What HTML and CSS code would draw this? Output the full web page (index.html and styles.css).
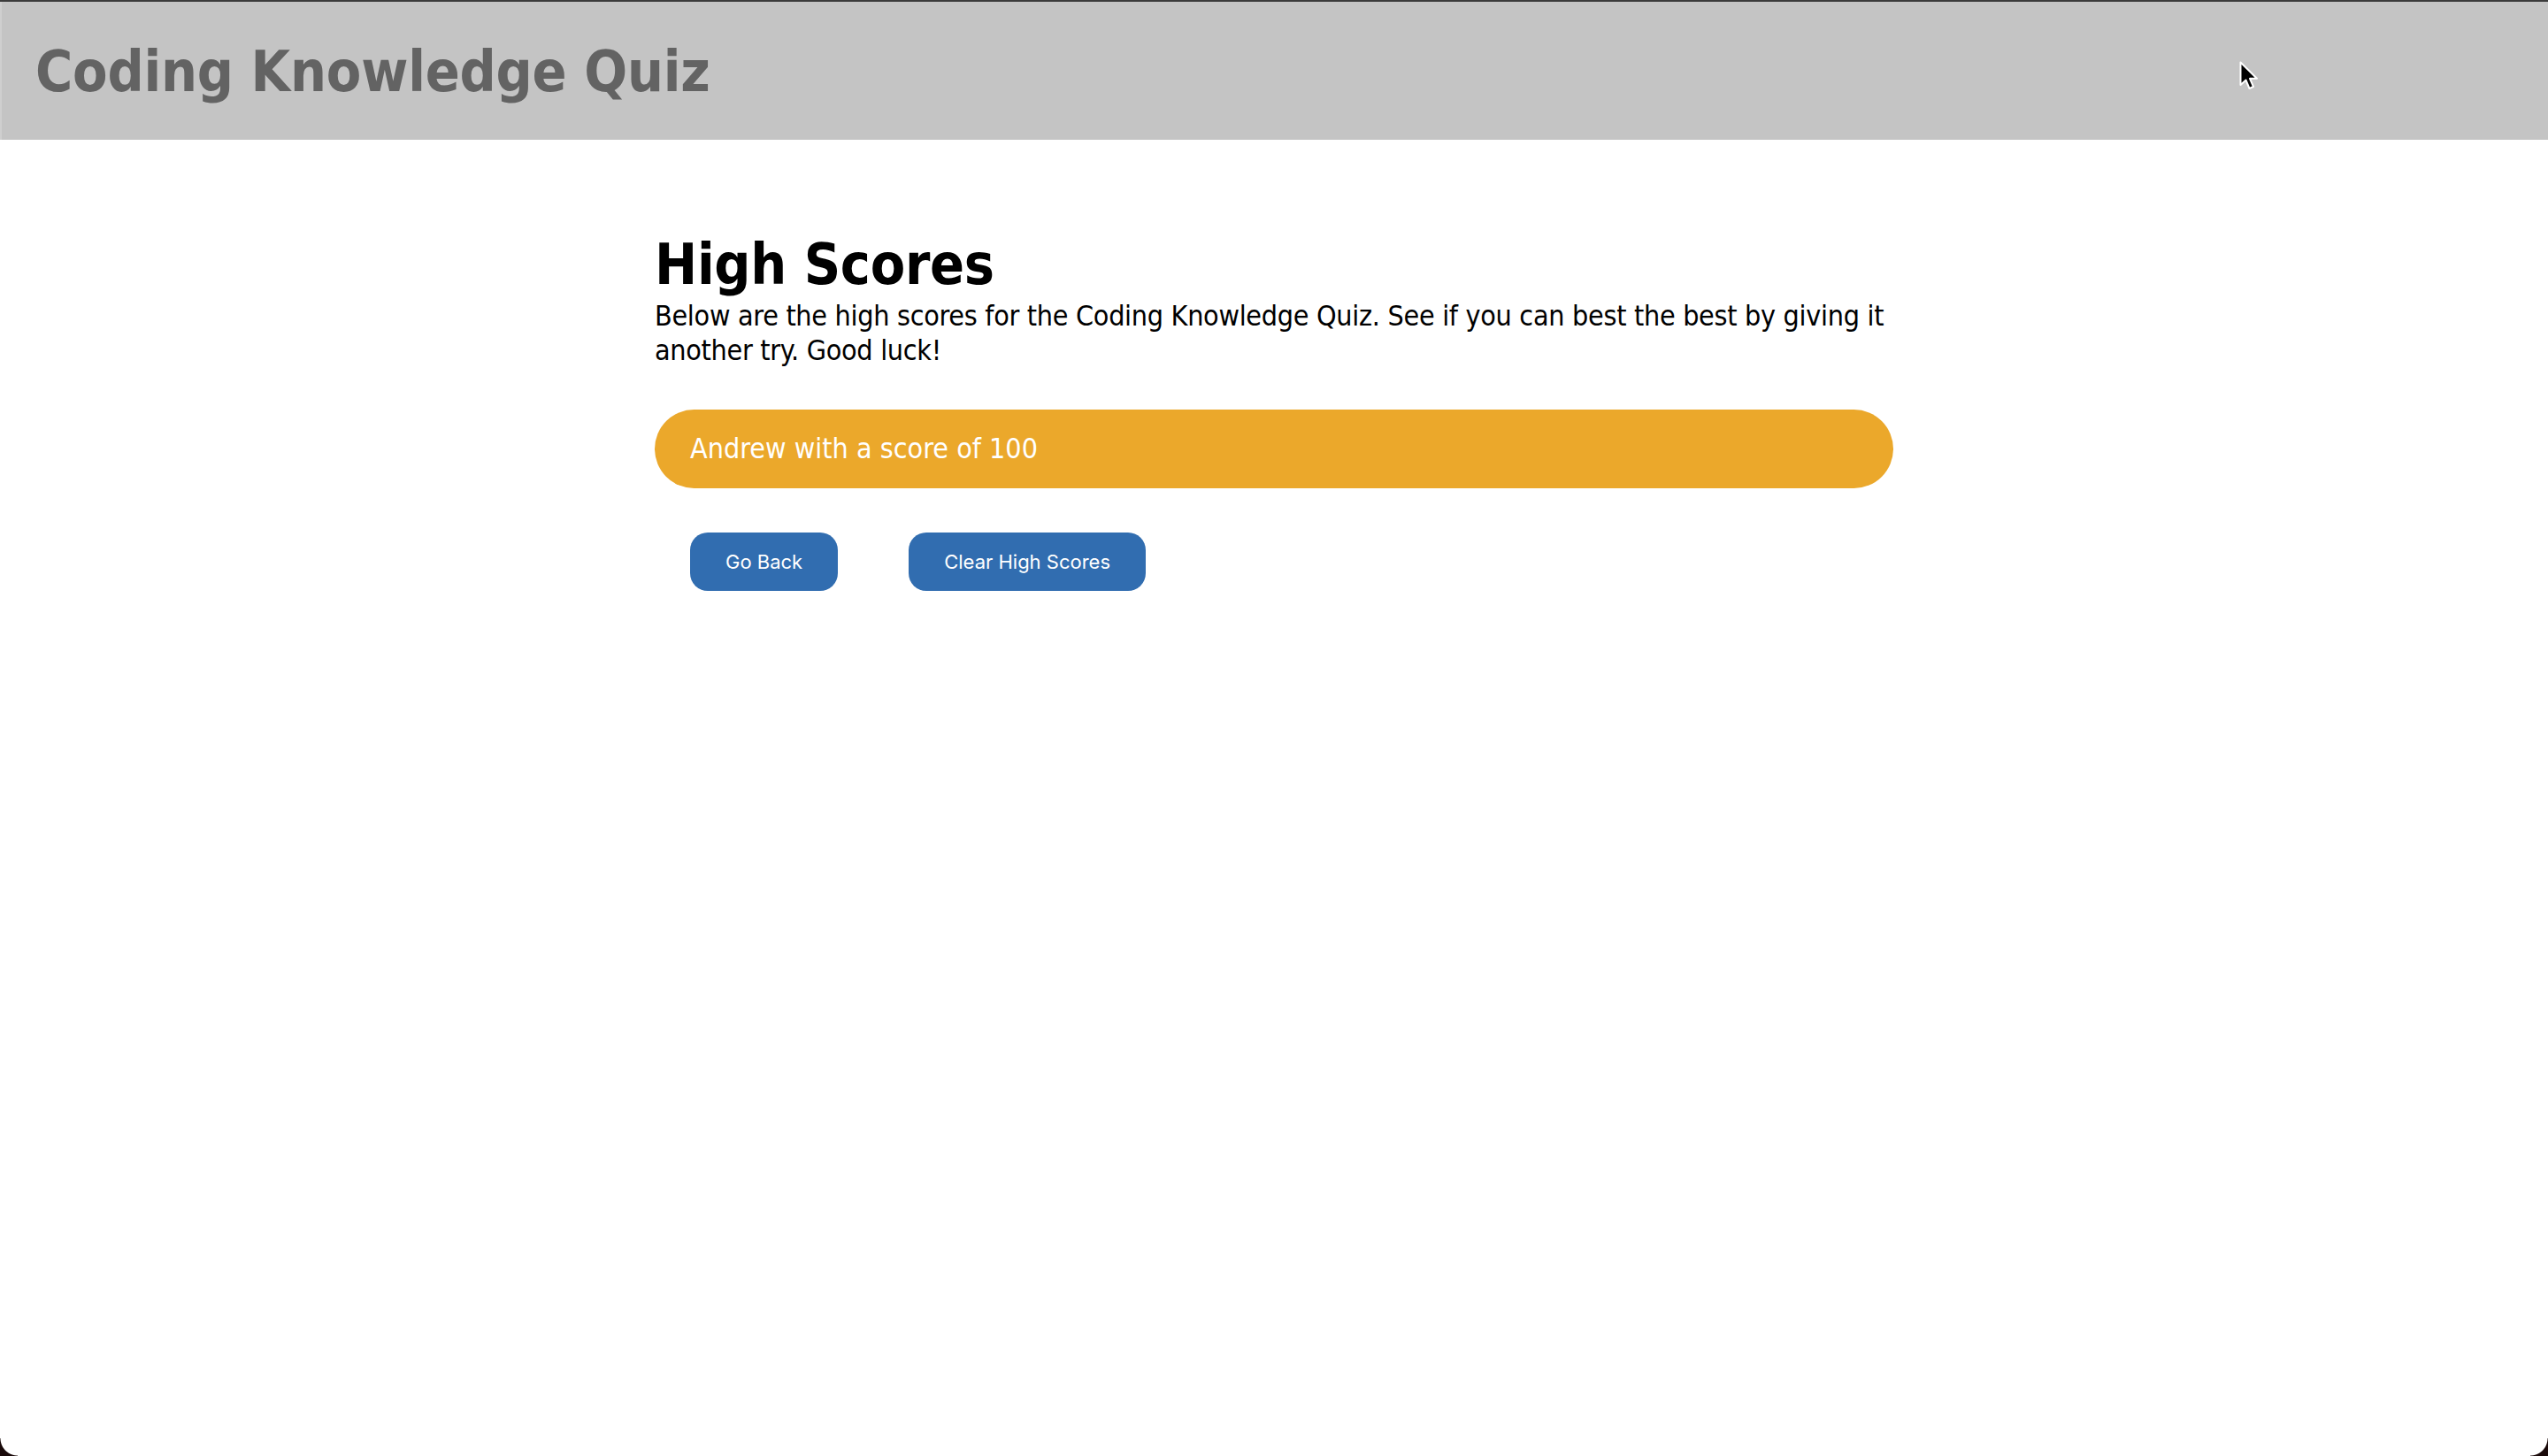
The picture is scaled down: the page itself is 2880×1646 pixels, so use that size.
FILE: index.html
```html
<!DOCTYPE html>
<html lang="en">
<head>
<meta charset="utf-8">
<title>Coding Knowledge Quiz - High Scores</title>
<link rel="stylesheet" href="styles.css">
</head>
<body>
<header class="site-header">
  <div class="brand">Coding Knowledge Quiz</div>
</header>
<main class="scores">
  <h1 class="scores-title">High Scores</h1>
  <p class="scores-intro">Below are the high scores for the Coding Knowledge Quiz. See if you can best the best by giving it another try. Good luck!</p>
  <ol class="score-list">
    <li class="score-item">Andrew with a score of 100</li>
  </ol>
  <div class="actions">
    <button class="btn">Go Back</button>
    <button class="btn">Clear High Scores</button>
  </div>
</main>
<svg class="cursor" width="24" height="36" viewBox="0 0 24 36" aria-hidden="true">
  <path d="M1.5 1.5 L1.5 27 L7.5 21.5 L11.5 31 L16 29 L12 19.8 L20 19.8 Z" fill="#000" stroke="#fff" stroke-width="2" stroke-linejoin="round"/>
</svg>
<div class="corner corner-left"></div>
<div class="corner corner-right"></div>
</body>
</html>
```
FILE: styles.css
```css
html, body {
  margin: 0;
  padding: 0;
  background: #ffffff;
}
body {
  min-height: 1646px;
  box-sizing: border-box;
  border-top: 2px solid #3b3b3b;
  font-family: "DejaVu Sans Condensed", "DejaVu Sans", sans-serif;
  font-stretch: condensed;
  color: #000;
  position: relative;
  overflow: hidden;
}
.site-header {
  height: 156px;
  background: #c4c4c4;
  border-left: 2px solid #cfcfcf;
  display: flex;
  align-items: center;
  padding-left: 38px;
}
.brand {
  font-size: 64px;
  font-weight: bold;
  color: #636363;
  line-height: 1;
  padding-top: 2px;
  letter-spacing: -0.2px;
}
.scores {
  width: 1400px;
  margin: 0 auto;
}
.scores-title {
  font-size: 64px;
  font-weight: bold;
  line-height: 1.2;
  margin: 103px 0 0 0;
  letter-spacing: -0.3px;
}
.scores-intro {
  font-size: 32px;
  line-height: 39px;
  margin: 0;
  letter-spacing: -0.3px;
}
.score-list {
  list-style: none;
  margin: 47px 0 0 0;
  padding: 0;
}
.score-item {
  height: 89px;
  border-radius: 45px;
  background: #eba82b;
  color: #ffffff;
  font-size: 32px;
  display: flex;
  align-items: center;
  padding-left: 40px;
}
.actions {
  display: flex;
  gap: 80px;
  margin: 50px 0 0 40px;
}
.btn {
  font-family: Inter, Roboto, sans-serif;
  font-size: 22px;
  color: #ffffff;
  background: #316db0;
  border: none;
  border-radius: 20px;
  height: 66px;
  padding: 0 40px;
}
.cursor {
  position: absolute;
  left: 2531px;
  top: 67px;
}
.corner {
  position: absolute;
  bottom: 0;
  width: 20px;
  height: 20px;
}
.corner-left {
  left: 0;
  background: radial-gradient(circle at 100% 0, transparent 19px, #1a0a0a 20px);
}
.corner-right {
  right: 0;
  background: radial-gradient(circle at 0 0, transparent 19px, #1a0a0a 20px);
}
```
